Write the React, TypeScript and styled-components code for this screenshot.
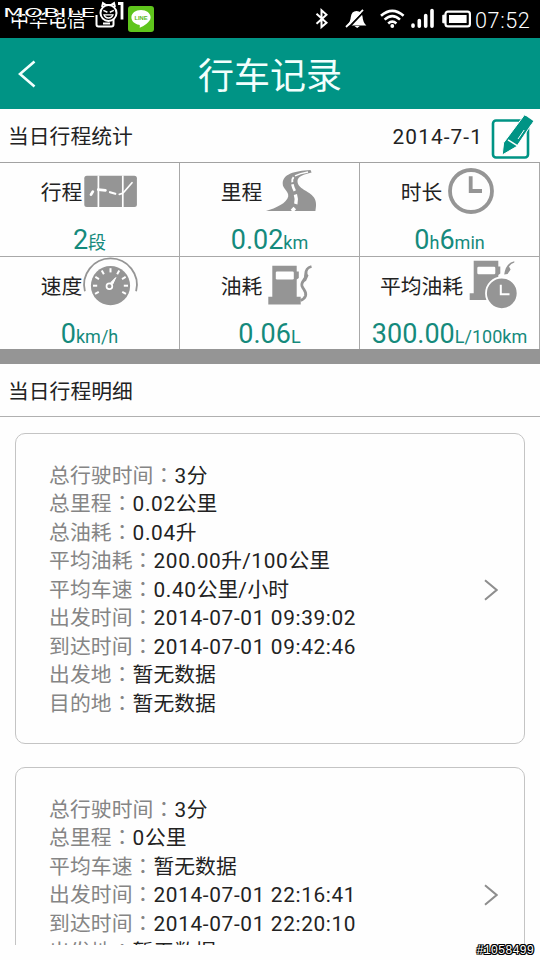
import { Fragment, ReactNode } from "react";
import styled, { createGlobalStyle } from "styled-components";

interface IStat {
  label: string;
  icon: ReactNode;
  parts: [string, string][];
}

interface ITrip {
  id: number;
  rows: [string, string][];
}

const GREY = "#959595";
const GREEN = "#009485";

const TripIcon = () => (
  <StatIcon viewBox="0 0 54 50">
    <rect x="0.3" y="9.7" width="52.6" height="31.3" rx="2.5" fill={GREY} />
    <path d="M14.4 9.5V41.2M38.8 9.5V41.2" stroke="#fff" strokeWidth="1.7" />
    <g fill="none" stroke="#fff" strokeLinecap="round">
      <path d="M7 28.6L8.8 25.6" strokeWidth="2.8" />
      <path d="M14.2 23.6L21.5 24.4" strokeWidth="2.6" />
      <path d="M26 26.2L31.3 27.8" strokeWidth="2.2" />
      <path d="M35.3 28.4Q38.5 28 40 26L48 16.7" strokeWidth="1.7" />
    </g>
  </StatIcon>
);

const RoadIcon = () => (
  <StatIcon viewBox="0 0 54 50">
    <path
      d="M2 45C12 42 23 37 24.2 30.5C25 25 18.5 23 18.7 17.5C19 8 30 5 46.5 4L47.6 6.4C40 8.6 33.5 10 33.5 15C33.5 23 45 24.5 50 31.5C53 36 52 41 51.4 45Z"
      fill={GREY}
    />
    <g fill="none" stroke="#fff">
      <path d="M31 9.8Q36 7.3 44 6" strokeWidth="1.5" />
      <path d="M29.6 11.2Q27.6 13.5 28.3 16.2" strokeWidth="2" />
      <path d="M28.4 18.2Q29 21.5 30.8 24.8" strokeWidth="2.6" />
      <path d="M31.4 28.5Q33 33 31.8 38" strokeWidth="3.4" />
      <path d="M30.8 42L28 45" strokeWidth="3.6" />
    </g>
  </StatIcon>
);

const ClockIcon = () => (
  <StatIcon viewBox="0 0 54 50">
    <circle cx="27" cy="25" r="21" fill="none" stroke={GREY} strokeWidth="3.8" />
    <path d="M26.7 10.3V25H38" fill="none" stroke={GREY} strokeWidth="3.8" />
  </StatIcon>
);

const ticks = [-118, -90, -60, -30, 0, 30, 60, 90, 118];

const SpeedIcon = () => (
  <StatIcon viewBox="0 4 54 50">
    <path
      d="M0.9 35.3A26.4 26.4 0 1 1 52.1 35.3"
      fill="none"
      stroke={GREY}
      strokeWidth="1.8"
    />
    <circle cx="26.5" cy="29.7" r="19.6" fill={GREY} />
    {ticks.map((angle) => (
      <path
        key={angle}
        d="M26.5 12.2V16.4"
        stroke="#fff"
        strokeWidth="2"
        transform={`rotate(${angle} 26.5 29.7)`}
      />
    ))}
    <path d="M31.8 21.5L26.8 26.5L28.8 28Z" fill="#fff" stroke="#fff" />
    <circle cx="25.4" cy="30.3" r="2.9" fill={GREY} stroke="#fff" strokeWidth="1.7" />
  </StatIcon>
);

const FuelIcon = () => (
  <StatIcon viewBox="0 4 54 50">
    <path d="M8.3 9.7H32.7V15.5H34.8V22L32.7 23.5V40.7H36.7V48.6H4.3V40.7H8.3Z" fill={GREY} />
    <rect x="11.8" y="15.6" width="18" height="7.8" rx="1.2" fill="#fff" />
    <path
      d="M47.5 10.5Q41.5 12 42 18C42.4 24 36.5 25 38 30C39.5 34 43 36 41.5 40Q40 43.5 36.5 44.3"
      fill="none"
      stroke={GREY}
      strokeWidth="2.8"
    />
    <path d="M41 15L44.5 19.5L42 25L39.4 26Z" fill={GREY} />
  </StatIcon>
);

const AverageFuelIcon = () => (
  <StatIcon viewBox="0 4 54 50">
    <path d="M8.7 4.7H33.3V10.5H35.3V17.5L33.3 19V37.3H22V44H4.7V37.3H8.7Z" fill={GREY} />
    <rect x="12.3" y="10.7" width="18" height="7.6" rx="1.2" fill="#fff" />
    <path d="M49.3 5.2Q40.8 7 39.2 18.6L42.6 18L45.6 13.4L44 10.5Q46 7.5 49.3 6.5Z" fill={GREY} />
    <circle cx="36.8" cy="37.3" r="15.8" fill={GREY} stroke="#fff" strokeWidth="1.8" />
    <path d="M35.8 28.7V38.3H44.5" fill="none" stroke="#fff" strokeWidth="2" />
  </StatIcon>
);

const stats: IStat[] = [
  { label: "行程", icon: <TripIcon />, parts: [["2", "段"]] },
  { label: "里程", icon: <RoadIcon />, parts: [["0.02", "km"]] },
  {
    label: "时长",
    icon: <ClockIcon />,
    parts: [
      ["0", "h"],
      ["6", "min"],
    ],
  },
  { label: "速度", icon: <SpeedIcon />, parts: [["0", "km/h"]] },
  { label: "油耗", icon: <FuelIcon />, parts: [["0.06", "L"]] },
  { label: "平均油耗", icon: <AverageFuelIcon />, parts: [["300.00", "L/100km"]] },
];

const trips: ITrip[] = [
  {
    id: 1,
    rows: [
      ["总行驶时间", "3分"],
      ["总里程", "0.02公里"],
      ["总油耗", "0.04升"],
      ["平均油耗", "200.00升/100公里"],
      ["平均车速", "0.40公里/小时"],
      ["出发时间", "2014-07-01 09:39:02"],
      ["到达时间", "2014-07-01 09:42:46"],
      ["出发地", "暂无数据"],
      ["目的地", "暂无数据"],
    ],
  },
  {
    id: 2,
    rows: [
      ["总行驶时间", "3分"],
      ["总里程", "0公里"],
      ["平均车速", "暂无数据"],
      ["出发时间", "2014-07-01 22:16:41"],
      ["到达时间", "2014-07-01 22:20:10"],
      ["出发地", "暂无数据"],
      ["目的地", "暂无数据"],
    ],
  },
];

// latin runs get a little tracking, chinese runs don't
const Mixed = ({ text }: { text: string }) => (
  <>
    {text.split(/([\x20-\x7e]+)/).map((run, i) =>
      i % 2 ? <Latin key={i}>{run}</Latin> : <Fragment key={i}>{run}</Fragment>
    )}
  </>
);

const App = () => {
  return (
    <Screen>
      <GlobalStyle />
      <StatusBar>
        <Carrier>中华电信</Carrier>
        <ShotIcon viewBox="0 0 20 20">
          <path d="M1.5 6V15.5Q1.5 17.5 3.5 17.5H16.5Q18.5 17.5 18.5 15.5V6" />
          <path d="M8 14.5H15" />
        </ShotIcon>
        <LineIcon viewBox="0 0 26 26">
          <rect width="26" height="26" rx="3" fill="#5fc51c" />
          <path
            d="M13 4C7.6 4 3.4 7.2 3.4 11.4C3.4 15 6.6 17.8 11 18.7C12.2 19 11.8 20 11.7 21.8C15.5 20 22.6 16 22.6 11.4C22.6 7.2 18.4 4 13 4Z"
            fill="#fff"
          />
          <text x="13" y="13.6" textAnchor="middle" fontSize="5.8" fontWeight="700" fill="#58b820">
            LINE
          </text>
        </LineIcon>
        <Watermark>
          <WatermarkText>MOBILE</WatermarkText>
          <Mascot viewBox="0 0 22 24">
            <path d="M5 7L6 3L9 5H14L17 3L18 7" />
            <circle cx="11.5" cy="13" r="8" />
            <path d="M6.4 10.4L10.4 12.2M16.8 10.4L12.8 12.2" strokeWidth="1.5" />
            <path d="M7 14.8H16Q15 18 11.5 18T7 14.8Z" strokeWidth="1.3" />
          </Mascot>
          <WatermarkOne viewBox="0 0 7 20">
            <path d="M1 2.5H5V18.5" />
          </WatermarkOne>
        </Watermark>
        <Tray viewBox="0 0 158 24">
          <path
            d="M1.5 6.8L11.5 15.8L6.5 20V3.2L11.5 7.8L1.5 16.8"
            fill="none"
            stroke="#fff"
            strokeWidth="2"
          />
          <path
            d="M32 18.6Q35.5 15 35.8 10Q36.5 4 41.5 4Q47 4 47.6 10Q47.8 15 51.4 18.6ZM39.5 19H44.8L42.2 21Z"
            fill="#fff"
          />
          <path d="M49.8 3.6L33.6 20.6" stroke="#000" strokeWidth="2" />
          <path d="M48 2.8L31 20" stroke="#fff" strokeWidth="1.8" />
          <g fill="none" stroke="#fff" strokeWidth="2.6">
            <path d="M66 8.8Q77.3 -1 88.6 8.8" />
            <path d="M69.6 12.6Q77.3 5.7 85 12.6" />
            <path d="M73.2 16.4Q77.3 12.8 81.4 16.4" />
          </g>
          <circle cx="77.3" cy="19" r="1.9" fill="#fff" />
          <path
            d="M98 18V19.2M104.3 13.5V19.2M110.7 8.5V19.2M117 3.5V19.2"
            stroke="#fff"
            strokeWidth="3.6"
            strokeLinecap="round"
          />
          <rect x="130.5" y="4.6" width="24.4" height="14.8" rx="2.4" fill="none" stroke="#fff" strokeWidth="2.2" />
          <path d="M130 8.2H127.8V15.8H130Z" fill="#fff" stroke="#fff" strokeLinejoin="round" />
          <rect x="134" y="8" width="17.6" height="8" fill="#fff" />
        </Tray>
        <Time>07:52</Time>
      </StatusBar>
      <Header>
        <BackIcon viewBox="0 0 18 28">
          <path d="M16.5 1.5L2 14L16.5 26.5" />
        </BackIcon>
        <Title>行车记录</Title>
      </Header>
      <SummaryBar>
        <SectionTitle>当日行程统计</SectionTitle>
        <DateText>2014-7-1</DateText>
        <EditIcon viewBox="0 0 44 46">
          <rect x="3" y="7.5" width="35" height="37" rx="3" fill="#fff" stroke={GREEN} strokeWidth="2.6" />
          <path d="M34.5 1.8L43.6 8.2L26.6 33.6L12.2 42L13.6 29.8Z" fill={GREEN} stroke="#fff" />
          <path d="M35.6 2.8L43.2 8L40.8 11.4L33.2 6.2Z" fill={GREEN} />
          <path d="M18 26.8L28 33.2" stroke="#fff" strokeWidth="1.5" />
          <path d="M28 26L34.2 17" stroke="#fff" strokeWidth="1" />
        </EditIcon>
      </SummaryBar>
      <StatGrid>
        {stats.map((stat) => (
          <StatCell key={stat.label}>
            <StatHead>
              <StatLabel>{stat.label}</StatLabel>
              {stat.icon}
            </StatHead>
            <StatValue>
              {stat.parts.map(([value, unit]) => (
                <Fragment key={unit}>
                  {value}
                  <Unit>{unit}</Unit>
                </Fragment>
              ))}
            </StatValue>
          </StatCell>
        ))}
      </StatGrid>
      <DetailBar>
        <SectionTitle>当日行程明细</SectionTitle>
      </DetailBar>
      <TripList>
        {trips.map((trip) => (
          <TripCard key={trip.id}>
            <TripRows>
              {trip.rows.map(([label, value]) => (
                <TripRow key={label}>
                  <RowLabel>
                    {label}
                    <Colon>：</Colon>
                  </RowLabel>
                  <Mixed text={value} />
                </TripRow>
              ))}
            </TripRows>
            <Chevron viewBox="0 0 14 22">
              <path d="M1 1.2L12.6 11L1 20.8" />
            </Chevron>
          </TripCard>
        ))}
      </TripList>
      <PhotoId>#1058499</PhotoId>
    </Screen>
  );
};

const GlobalStyle = createGlobalStyle`
  * {
    box-sizing: border-box;
  }
  body {
    margin: 0;
    background: #fff;
  }
`;
const Screen = styled.main`
  position: relative;
  width: 540px;
  height: 960px;
  overflow: hidden;
  display: flex;
  flex-direction: column;
  background-color: #fefefe;
  color: #222;
  font-family: Roboto, "Noto Sans CJK SC", sans-serif;
  font-size: 20.8px;
  white-space: nowrap;
`;
const StatusBar = styled.div`
  position: relative;
  flex: none;
  height: 38px;
  padding: 0 9px 0 10px;
  display: flex;
  align-items: center;
  background-color: #000;
  color: #fff;
`;
const Carrier = styled.span`
  padding-top: 3px;
  font-size: 19px;
  line-height: 35px;
`;
const ShotIcon = styled.svg`
  width: 20px;
  height: 20px;
  margin: 0 13px 0 9px;
  fill: none;
  stroke: #fff;
  stroke-width: 2;
`;
const LineIcon = styled.svg`
  width: 26px;
  height: 26px;
  font-family: "Liberation Sans", sans-serif;
`;
const Watermark = styled.div`
  position: absolute;
  left: 3px;
  top: 0;
  width: 124px;
  height: 26px;
`;
const WatermarkText = styled.span`
  position: absolute;
  left: 0;
  top: 6px;
  font: 400 12px/14px "DejaVu Sans", sans-serif;
  transform: scaleX(2.02);
  transform-origin: left;
  text-shadow: 0 1px 0 #000, 0 -1px 0 #000, 0 2px 0 #000;
`;
const Mascot = styled.svg`
  position: absolute;
  left: 94px;
  top: 0;
  width: 22px;
  height: 24px;
  fill: #000;
  stroke: #fff;
  stroke-width: 2;
`;
const WatermarkOne = styled.svg`
  position: absolute;
  left: 114px;
  top: 1px;
  width: 7px;
  height: 20px;
  fill: none;
  stroke: #fff;
  stroke-width: 2.8;
`;
const Tray = styled.svg`
  width: 158px;
  height: 24px;
  margin-left: auto;
`;
const Time = styled.span`
  width: 56px;
  margin-left: 2px;
  padding-top: 3px;
  font-size: 21.6px;
  font-weight: 300;
  line-height: 35px;
  letter-spacing: 0.6px;
`;
const Header = styled.header`
  flex: none;
  height: 71px;
  padding: 0 18px;
  display: flex;
  align-items: center;
  background-color: #009485;
  color: #f2fffd;
`;
const BackIcon = styled.svg`
  width: 18px;
  height: 28px;
  fill: none;
  stroke: currentColor;
  stroke-width: 2.6;
`;
const Title = styled.h1`
  flex: 1;
  margin: 0 18px 0 0;
  padding-top: 7px;
  text-align: center;
  font-size: 36px;
  line-height: 64px;
  font-weight: 400;
`;
const SummaryBar = styled.div`
  flex: none;
  height: 54px;
  padding: 0 6px 0 8px;
  display: flex;
  align-items: center;
  border-bottom: 1px solid #a2a2a2;
`;
const SectionTitle = styled.h2`
  margin: 0;
  padding-top: 4px;
  font-size: 20.8px;
  line-height: 49px;
  font-weight: 400;
`;
const DateText = styled.span`
  margin-left: auto;
  padding-top: 2px;
  letter-spacing: 1.1px;
`;
const EditIcon = styled.svg`
  width: 44px;
  height: 46px;
  margin-left: 7px;
`;
const StatGrid = styled.section`
  flex: none;
  display: grid;
  grid-template-columns: repeat(3, 180px);
  grid-auto-rows: 94px;
  height: 201px;
  border-bottom: 15px solid #959595;
  overflow: hidden;
`;
const StatCell = styled.div`
  display: flex;
  flex-direction: column;
  align-items: center;
  padding-top: 3px;
  border-right: 1px solid #a8a8a8;
  border-bottom: 1px solid #a8a8a8;
`;
const StatHead = styled.div`
  height: 50px;
  display: flex;
  align-items: center;
  gap: 2px;
`;
const StatLabel = styled.span`
  padding-bottom: 1px;
`;
const StatIcon = styled.svg`
  width: 54px;
  height: 50px;
  overflow: visible;
`;
const StatValue = styled.div`
  color: #158a7c;
  font-size: 27px;
  line-height: 48px;
`;
const Unit = styled.span`
  font-size: 18px;
`;
const DetailBar = styled.div`
  flex: none;
  height: 53px;
  padding-left: 8px;
  border-bottom: 1px solid #b0b0b0;
`;
const TripList = styled.section`
  flex: none;
  height: 528px;
  padding: 15.5px 15px 0;
  overflow: hidden;
`;
const TripCard = styled.article`
  display: flex;
  align-items: center;
  margin-bottom: 23px;
  padding: 28px 26px 24.5px 33px;
  border: 1px solid #c4c4c4;
  border-radius: 10px;
`;
const TripRows = styled.div`
  flex: 1;
`;
const TripRow = styled.div`
  height: 28.5px;
  line-height: 28.5px;
`;
const RowLabel = styled.span`
  color: #858585;
  letter-spacing: 0.1px;
`;
// the TC face centres the full-width colon in its cell
const Colon = styled.span`
  font-family: "Noto Sans CJK TC", sans-serif;
  line-height: 1;
`;
const Latin = styled.span`
  letter-spacing: 0.65px;
`;
const Chevron = styled.svg`
  width: 14px;
  height: 22px;
  fill: none;
  stroke: #8e8e8e;
  stroke-width: 2;
`;
const PhotoId = styled.span`
  position: absolute;
  right: 6px;
  bottom: 2px;
  color: #fff;
  font: 400 12px/13px "Liberation Mono", monospace;
  text-shadow: 1px 0 #000, -1px 0 #000, 0 1px #000, 0 -1px #000, 1px 1px #000,
    -1px -1px #000, 1px -1px #000, -1px 1px #000;
`;

export default App;
